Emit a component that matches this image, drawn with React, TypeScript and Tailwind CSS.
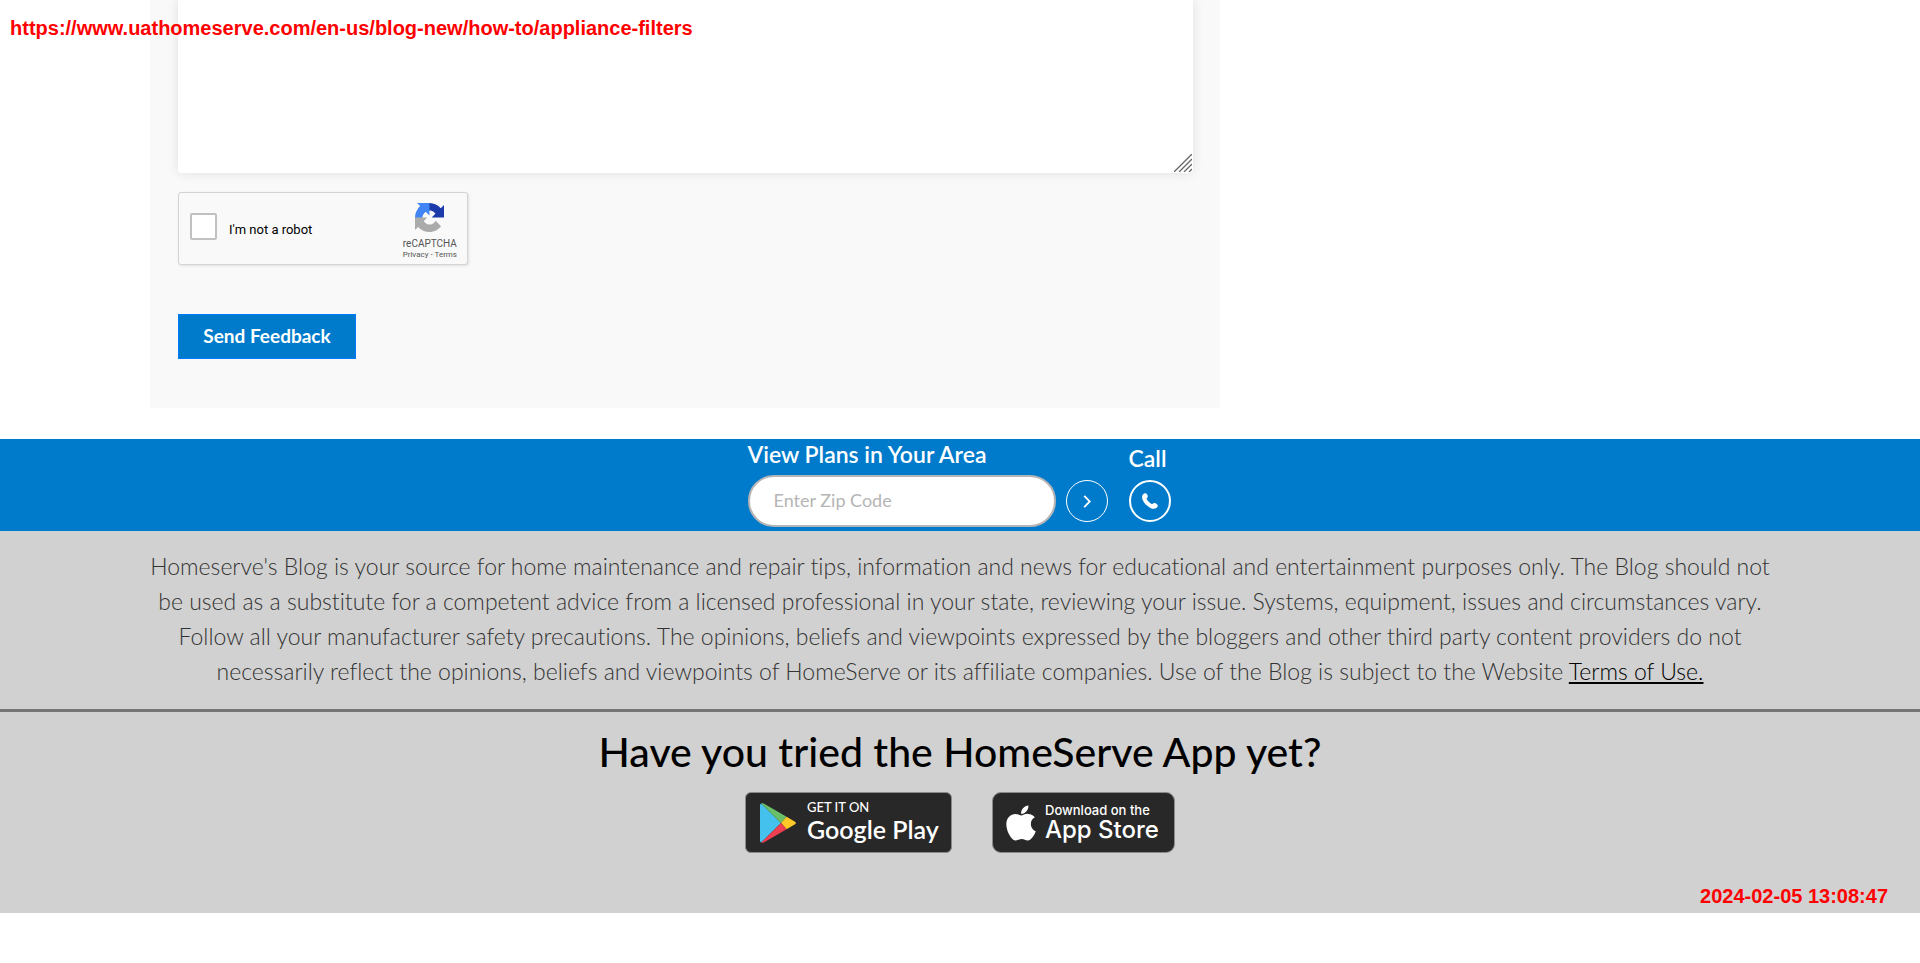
import React from "react";
import { FaApple } from "react-icons/fa";

function RecaptchaLogo() {
  return (
    <svg viewBox="0 0 64 64" className="size-[29px]" aria-hidden="true">
      <path fill="#1c3aa9" d="M64 31.955l-.033-1.37V4.687l-7.16 7.16C50.948 4.674 42.033.093 32.05.093c-10.4 0-19.622 4.96-25.458 12.64l11.736 11.86a15.55 15.55 0 0 1 4.754-5.334c2.05-1.6 4.952-2.906 8.968-2.906.485 0 .86.057 1.135.163 4.976.393 9.288 3.14 11.828 7.124l-8.307 8.307L64 31.953" />
      <path fill="#4285f4" d="M31.862.094l-1.37.033H4.594l7.16 7.16C4.58 13.147 0 22.06 0 32.046c0 10.4 4.96 19.622 12.64 25.458L24.5 45.768a15.55 15.55 0 0 1-5.334-4.754c-1.6-2.05-2.906-4.952-2.906-8.968 0-.485.057-.86.163-1.135.393-4.976 3.14-9.288 7.124-11.828l8.307 8.307L31.86.095" />
      <path fill="#ababab" d="M.001 32.045l.033 1.37v25.898l7.16-7.16c5.86 7.173 14.774 11.754 24.76 11.754 10.4 0 19.622-4.96 25.458-12.64l-11.736-11.86a15.55 15.55 0 0 1-4.754 5.334c-2.05 1.6-4.952 2.906-8.968 2.906-.485 0-.86-.057-1.135-.163-4.976-.393-9.288-3.14-11.828-7.124l8.307-8.307c-10.522.04-22.4.066-27.295-.005" />
    </svg>
  );
}

function PlayLogo() {
  return (
    <svg viewBox="0 0 36 40" className="h-10 w-9 shrink-0" aria-hidden="true">
      <path fill="#45c1ee" d="M1.2.4C.5.8 0 1.500 0 2.600v34.800c0 1.100.5 1.800 1.200 2.200L21 20z" />
      <path fill="#6abf69" d="M1.200.4C1.900 0 2.800.1 3.700.6L26.600 13.800 21 20z" />
      <path fill="#ffca28" d="M26.600 13.800l8 4.600c1.700 1 1.700 2.200 0 3.200l-8 4.600L21 20z" />
      <path fill="#ef3f51" d="M1.200 39.600c.7.4 1.600.3 2.500-.2l22.900-13.200L21 20z" />
    </svg>
  );
}

function Recaptcha() {
  return (
    <div className="flex h-[73px] w-[290px] items-center justify-between rounded-[3px] border border-[#d3d3d3] bg-[#f9f9f9] pr-[10px] pl-[11px] font-[Roboto,sans-serif] shadow-[1px_1px_3px_rgba(0,0,0,0.1)]">
      <label className="flex items-center gap-3 pb-1 text-black">
        <input
          type="checkbox"
          className="size-[27px] appearance-none rounded-[2px] border-2 border-[#c1c1c1] bg-white"
        />
        <span className="pt-[6px] text-[13px] leading-5">I'm not a robot</span>
      </label>
      <div className="flex flex-col items-center pt-[6px] text-[#555]">
        <RecaptchaLogo />
        <div className="pt-[6px] text-[10px] leading-3">reCAPTCHA</div>
        <div className="text-[8px] leading-[10px]">
          <a href="#privacy">Privacy</a> - <a href="#terms">Terms</a>
        </div>
      </div>
    </div>
  );
}

export default function App() {
  return (
    <div className="relative bg-white font-[Lato,sans-serif] [font-variant-ligatures:none]">
      <div className="absolute top-4 left-[10px] z-10 font-['Liberation_Sans',Arial,sans-serif] text-xl leading-6 font-bold text-[#ff0000]">
        https://www.uathomeserve.com/en-us/blog-new/how-to/appliance-filters
      </div>

      <main className="mx-auto max-w-[1620px] pb-[31px]">
        <form className="max-w-[1070px] bg-[#f9f9f9] pr-[27px] pb-[49px] pl-7">
          <div className="relative">
            <textarea
              aria-label="Feedback"
              className="block h-[173px] w-full resize-none rounded-b-[4px] bg-white p-4 shadow-[0_0_12px_rgba(0,0,0,0.1)]"
            />
            <svg viewBox="0 0 18 18" className="absolute right-[1px] bottom-[1px] size-[18px]" stroke="#666" strokeWidth="1.300" aria-hidden="true">
              <path d="M0 18L18 0M5 18L18 5M10 18l8-8M15 18l3-3" />
            </svg>
          </div>
          <div className="pt-[19px]">
            <Recaptcha />
          </div>
          <button
            type="button"
            className="mt-[49px] block h-[45px] w-[178px] border border-[#007bff] bg-[#007bcb] pb-[2px] text-[19px] leading-6 font-bold text-white"
          >
            Send Feedback
          </button>
        </form>
      </main>

      <section className="flex h-[92px] justify-center bg-[#007bcb] pr-[2px] text-white">
        <form className="flex items-end gap-[10px] pb-1">
          <div>
            <label htmlFor="zip" className="block pb-[7px] text-[23px] leading-7 font-semibold">
              View Plans in Your Area
            </label>
            <input
              id="zip"
              type="text"
              placeholder="Enter Zip Code"
              className="block h-[52px] w-[308px] rounded-full border-2 border-[#b5b5b5] bg-white px-6 pb-[2px] text-lg text-[#333] placeholder:text-[#b5b5b5]"
            />
          </div>
          <button
            type="button"
            aria-label="View plans"
            className="mb-[5px] flex size-[42px] items-center justify-center rounded-full border border-white"
          >
            <svg viewBox="0 0 8 14" className="h-[13px] w-2" fill="none" stroke="currentColor" strokeWidth="2" aria-hidden="true">
              <path d="M1 1l6 6-6 6" />
            </svg>
          </button>
        </form>
        <div className="ml-[21px] flex flex-col justify-end pb-[9px]">
          <div className="pb-2 text-[23px] leading-7 font-semibold">Call</div>
          <a
            href="#call"
            aria-label="Call"
            className="flex size-[42px] items-center justify-center rounded-full border-2 border-white"
          >
            <svg viewBox="0 0 16 16" className="size-4" fill="currentColor" aria-hidden="true">
              <path d="M1.200 1.200C2.500-.2 4.300.1 5.100 1.500l.5 1.100c.4 1 .1 1.700-.7 2.300-.4.400-.3.900.1 1.600.9 1.700 2.400 3.200 4.100 4.200.7.400 1.200.4 1.600 0 .7-.7 1.500-1 2.400-.6l1.300.6c1.500.8 1.900 2.600.5 3.900-1.500 1.500-4 1.500-6.500.3C4.900 13.100 2 10 .6 6.700-.3 4.500-.2 2.600 1.200 1.200z" />
            </svg>
          </a>
        </div>
      </section>

      <footer className="bg-[#d1d1d1]">
        <div className="border-b-[3px] border-[#757575] px-4 pt-[18px] pb-5 text-center text-[23px] leading-[35px] font-light text-[#333]">
          <p>
            Homeserve's Blog is your source for home maintenance and repair tips, information and news for educational and entertainment purposes only. The Blog should not
            <br />
            be used as a substitute for a competent advice from a licensed professional in your state, reviewing your issue. Systems, equipment, issues and circumstances vary.
            <br />
            Follow all your manufacturer safety precautions. The opinions, beliefs and viewpoints expressed by the bloggers and other third party content providers do not
            <br />
            necessarily reflect the opinions, beliefs and viewpoints of HomeServe or its affiliate companies. Use of the Blog is subject to the Website{" "}
            <a href="#terms-of-use" className="text-black underline">
              Terms of Use.
            </a>
          </p>
        </div>
        <div className="flex flex-col items-center pt-4 pb-[60px]">
          <h2 className="text-[41px] leading-[48px] font-medium text-black">Have you tried the HomeServe App yet?</h2>
          <div className="mt-4 flex gap-10">
            <a
              href="#google-play"
              className="flex h-[61px] w-[207px] items-center gap-[11px] rounded-[6px] border border-[#8a8a8a] bg-[#282828] pl-[14px] text-white"
            >
              <PlayLogo />
              <span className="flex flex-col pb-1">
                <span className="text-[13px] leading-4 font-medium">GET IT ON</span>
                <span className="text-[25px] leading-7 font-semibold whitespace-nowrap">Google Play</span>
              </span>
            </a>
            <a
              href="#app-store"
              className="flex h-[61px] w-[183px] items-center gap-[9px] rounded-[9px] border border-[#8a8a8a] bg-[#282828] pl-[13px] font-[Inter,sans-serif] text-white"
            >
              <FaApple className="h-10 w-[30px] shrink-0" aria-hidden="true" />
              <span className="flex flex-col pb-[2px]">
                <span className="text-[13px] leading-4 font-medium">Download on the</span>
                <span className="text-2xl leading-6 font-medium whitespace-nowrap">App Store</span>
              </span>
            </a>
          </div>
        </div>
      </footer>

      <time className="absolute right-8 bottom-[5px] font-['Liberation_Sans',Arial,sans-serif] text-xl leading-6 font-bold text-[#ff0000]">
        2024-02-05 13:08:47
      </time>
    </div>
  );
}
